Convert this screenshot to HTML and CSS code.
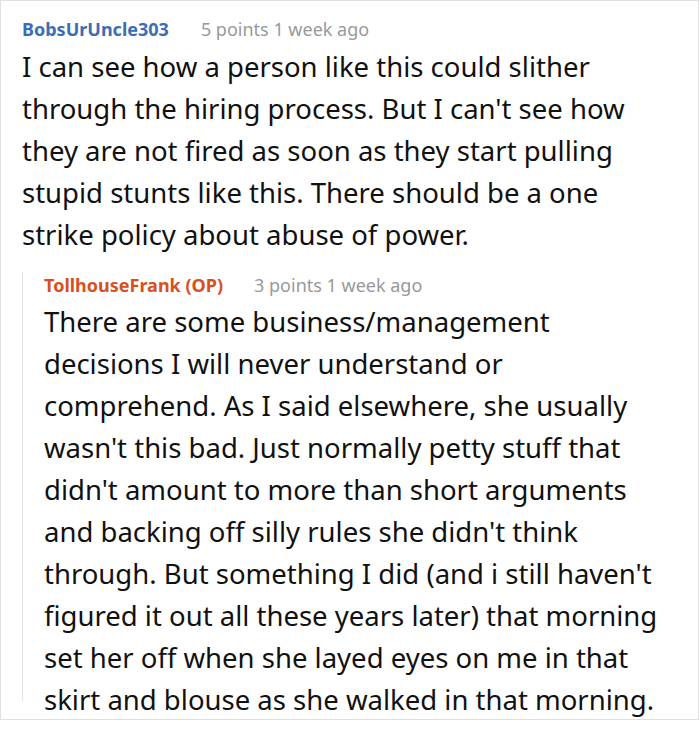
FILE: index.html
```html
<!DOCTYPE html>
<html>
<head>
<meta charset="utf-8">
<link rel="stylesheet" href="styles.css">
</head>
<body>
<div class="thread">
  <div class="comment">
    <div class="meta"><span class="author">BobsUrUncle303</span><span class="info">5 points 1 week ago</span></div>
    <div class="body">I can see how a person like this could slither through the hiring process. But I can't see how they are not fired as soon as they start pulling stupid stunts like this. There should be a one strike policy about abuse of power.</div>
    <div class="reply">
      <div class="meta"><span class="author op">TollhouseFrank (OP)</span><span class="info">3 points 1 week ago</span></div>
      <div class="body">There are some business/management decisions I will never understand or comprehend. As I said elsewhere, she usually wasn't this bad. Just normally petty stuff that didn't amount to more than short arguments and backing off silly rules she didn't think through. But something I did (and i still haven't figured it out all these years later) that morning set her off when she layed eyes on me in that skirt and blouse as she walked in that morning.</div>
    </div>
  </div>
</div>
</body>
</html>
```

FILE: styles.css
```css
html, body {
  margin: 0;
  padding: 0;
  background: #fff;
}
.thread {
  width: 697px;
  height: 718px;
  border: 1px solid #e0e0e0;
  font-family: "Noto Sans", sans-serif;
  color: #111;
  overflow: hidden;
}
.comment {
  padding: 15px 30px 0 21px;
}
.meta {
  font-size: 18px;
  line-height: 26px;
  display: flex;
  gap: 32px;
  white-space: nowrap;
}
.author {
  font-weight: bold;
  color: #3b6db3;
}
.author.op {
  color: #d94f1e;
}
.info {
  color: #999;
}
.body {
  font-size: 27.5px;
  line-height: 42px;
  margin-top: 4px;
}
.reply {
  margin-top: 27px;
  height: 429px;
  border-left: 1px solid #e3e3e3;
  padding-left: 21px;
}
.reply .meta {
  margin-top: -11px;
  gap: 31px;
}
.reply .body {
  margin-top: 3px;
}
```
